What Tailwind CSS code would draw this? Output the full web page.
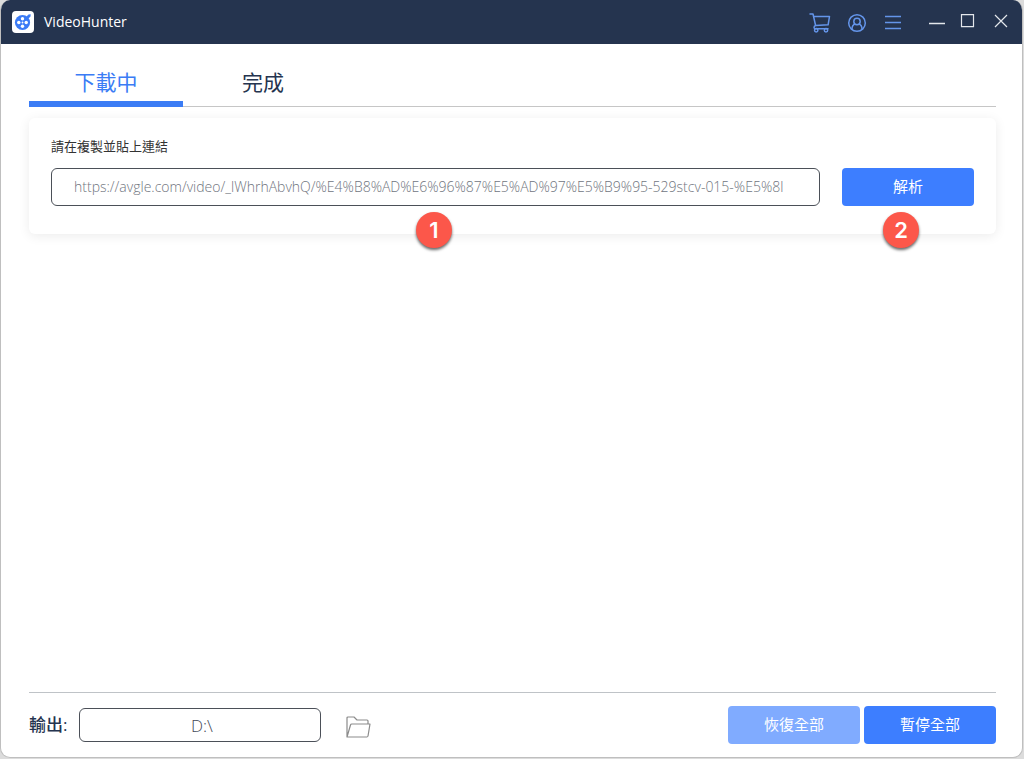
<!DOCTYPE html>
<html lang="zh-Hant">
<head>
<meta charset="utf-8">
<meta name="viewport" content="width=device-width, initial-scale=1">
<title>VideoHunter</title>
<script src="https://cdn.jsdelivr.net/npm/@tailwindcss/browser@4"></script>
</head>
<body class="bg-[#dcdcdc] font-['Open_Sans','Noto_Sans_CJK_TC',sans-serif] text-[#25344f]">
<div class="flex h-screen flex-col pr-px pb-px">
<div class="flex flex-1 flex-col overflow-hidden rounded-[10px] border border-[#bfbfbf] border-t-0 bg-white">
  <header class="flex h-11 shrink-0 items-center bg-[#25344f] pr-[13px] pl-[11px] text-white">
    <svg class="size-[22px]" viewBox="0 0 22 22" aria-hidden="true">
      <rect width="22" height="22" rx="4" fill="#fff"/>
      <circle cx="10.500" cy="11.500" r="7.600" fill="#3b7bf6"/>
      <path d="M14 6l2.500-2.500 2.200-.3-.2 2.300L16 8z" fill="#3b7bf6"/>
      <g fill="#fff"><circle cx="10.500" cy="7.800" r="1.700"/><circle cx="10.500" cy="15.200" r="1.700"/><circle cx="6.800" cy="11.500" r="1.700"/><circle cx="14.200" cy="11.500" r="1.700"/></g>
      <circle cx="10.500" cy="11.500" r=".9" fill="#fff"/>
    </svg>
    <h1 class="ml-[10px] text-[14px] leading-5">VideoHunter</h1>
    <div class="ml-auto flex items-center gap-4 pt-0.5 text-[#6495ea]">
      <button type="button" aria-label="購物車"><svg class="block size-[22px]" viewBox="0 0 22 22" fill="none" stroke="currentColor" stroke-width="1.500" stroke-linejoin="round" stroke-linecap="round"><path d="M1 2h3l2.600 11.500M4.500 4.500h16l-1.400 8.300-12.500.7c-2.200.7-2 3.300 0 3.300H19"/><circle cx="7.200" cy="18.300" r="1.700"/><circle cx="17" cy="18.300" r="1.700"/></svg></button>
      <button type="button" aria-label="帳戶"><svg class="block size-5" viewBox="0 0 20 20" fill="none" stroke="currentColor" stroke-width="1.500"><circle cx="10" cy="10" r="8.300"/><circle cx="10" cy="8.500" r="3.200"/><path d="M5 16.200c0-3 1.300-4.700 3.200-5.200M15 16.200c0-3-1.300-4.700-3.200-5.200"/></svg></button>
      <button type="button" aria-label="選單"><svg class="block size-5" viewBox="0 0 20 20" fill="none" stroke="currentColor" stroke-width="1.500"><path d="M2 3.500h16M2 9.500h16M2 15.500h16"/></svg></button>
    </div>
    <div class="ml-[26px] flex items-center gap-[15px] text-[#e4e7ec]">
      <button type="button" aria-label="最小化"><svg class="block size-4" viewBox="0 0 16 16" stroke="currentColor"><path d="M0 9.500h16" stroke-width="1.300"/></svg></button>
      <button type="button" aria-label="最大化"><svg class="block size-4" viewBox="0 0 16 16" fill="none" stroke="currentColor"><path d="M1.500 .7h12v12h-12z" stroke-width="1.200"/></svg></button>
      <button type="button" aria-label="關閉" class="ml-0.5"><svg class="block size-4" viewBox="0 0 16 16" stroke="currentColor" stroke-width="1.200"><path d="M2 1l12 12M14 1L2 13"/></svg></button>
    </div>
  </header>

  <main class="flex flex-1 flex-col pr-[26px] pl-7">
    <nav class="flex h-[63px] shrink-0 border-b border-[#c6c6c6] text-[21px]">
      <button type="button" class="-mb-px w-[154px] border-b-6 border-[#3b7cf5] pt-[21px] text-[#3b7cf5]">下載中</button>
      <button type="button" class="w-[160px] pt-4">完成</button>
    </nav>
    <section class="mt-[11px] rounded-md bg-white px-[22px] pt-4 pb-7 shadow-[0_2px_12px_rgba(0,0,0,0.08)]">
      <label for="url" class="block text-[13px] leading-6 text-[#333]">請在複製並貼上連結</label>
      <div class="mt-[10px] flex gap-[22px]">
        <div class="relative flex-1">
          <input id="url" type="text" class="block h-[38px] w-full rounded-md border border-[#4b5058] pr-3 pb-0.5 pl-[22px] text-[14px] font-light text-[#70757e]" value="https://avgle.com/video/_lWhrhAbvhQ/%E4%B8%AD%E6%96%87%E5%AD%97%E5%B9%95-529stcv-015-%E5%8l">
          <span class="absolute top-11 left-[365px] flex size-9 items-center justify-center rounded-full bg-[#fc574a] font-['Inter',sans-serif] text-[22px] font-semibold text-white shadow-[0_2px_3px_rgba(0,0,0,0.6)]">1</span>
        </div>
        <div class="relative">
          <button type="button" class="block h-[38px] w-[132px] rounded bg-[#3d7eff] pb-0.5 text-[15px] text-white">解析</button>
          <span class="absolute top-11 left-[41px] flex size-9 items-center justify-center rounded-full bg-[#fc574a] font-['Inter',sans-serif] text-[22px] font-semibold text-white shadow-[0_2px_3px_rgba(0,0,0,0.6)]">2</span>
        </div>
      </div>
    </section>
    <footer class="mt-auto flex h-[65px] items-center border-t border-[#bfc3c7]">
      <label for="output" class="w-[50px] text-[17px] font-medium">輸出:</label>
      <input id="output" type="text" value="D:\" class="h-[34px] w-[242px] rounded-md border border-[#4b5058] pl-1 text-center text-[17px] font-light text-[#3f4856]">
      <button type="button" aria-label="開啟資料夾" class="ml-6 pt-1 text-[#8b8b8b]"><svg class="block h-[22px] w-[26px]" viewBox="0 0 26 22" fill="none" stroke="currentColor" stroke-width="1.200" stroke-linejoin="round"><path d="M2 21V2q0-1 1-1h6l3 3h10q1 0 1 1v3M2 21L5.500 9q.3-1 1.300-1H25l-2 12q-.2 1-1.200 1z"/></svg></button>
      <div class="ml-auto flex gap-1 text-[15px] text-white">
        <button type="button" class="h-[38px] w-[132px] rounded bg-[#80abff] pb-0.5">恢復全部</button>
        <button type="button" class="h-[38px] w-[132px] rounded bg-[#3d7eff] pb-0.5">暫停全部</button>
      </div>
    </footer>
  </main>
</div>
</div>
</body>
</html>
